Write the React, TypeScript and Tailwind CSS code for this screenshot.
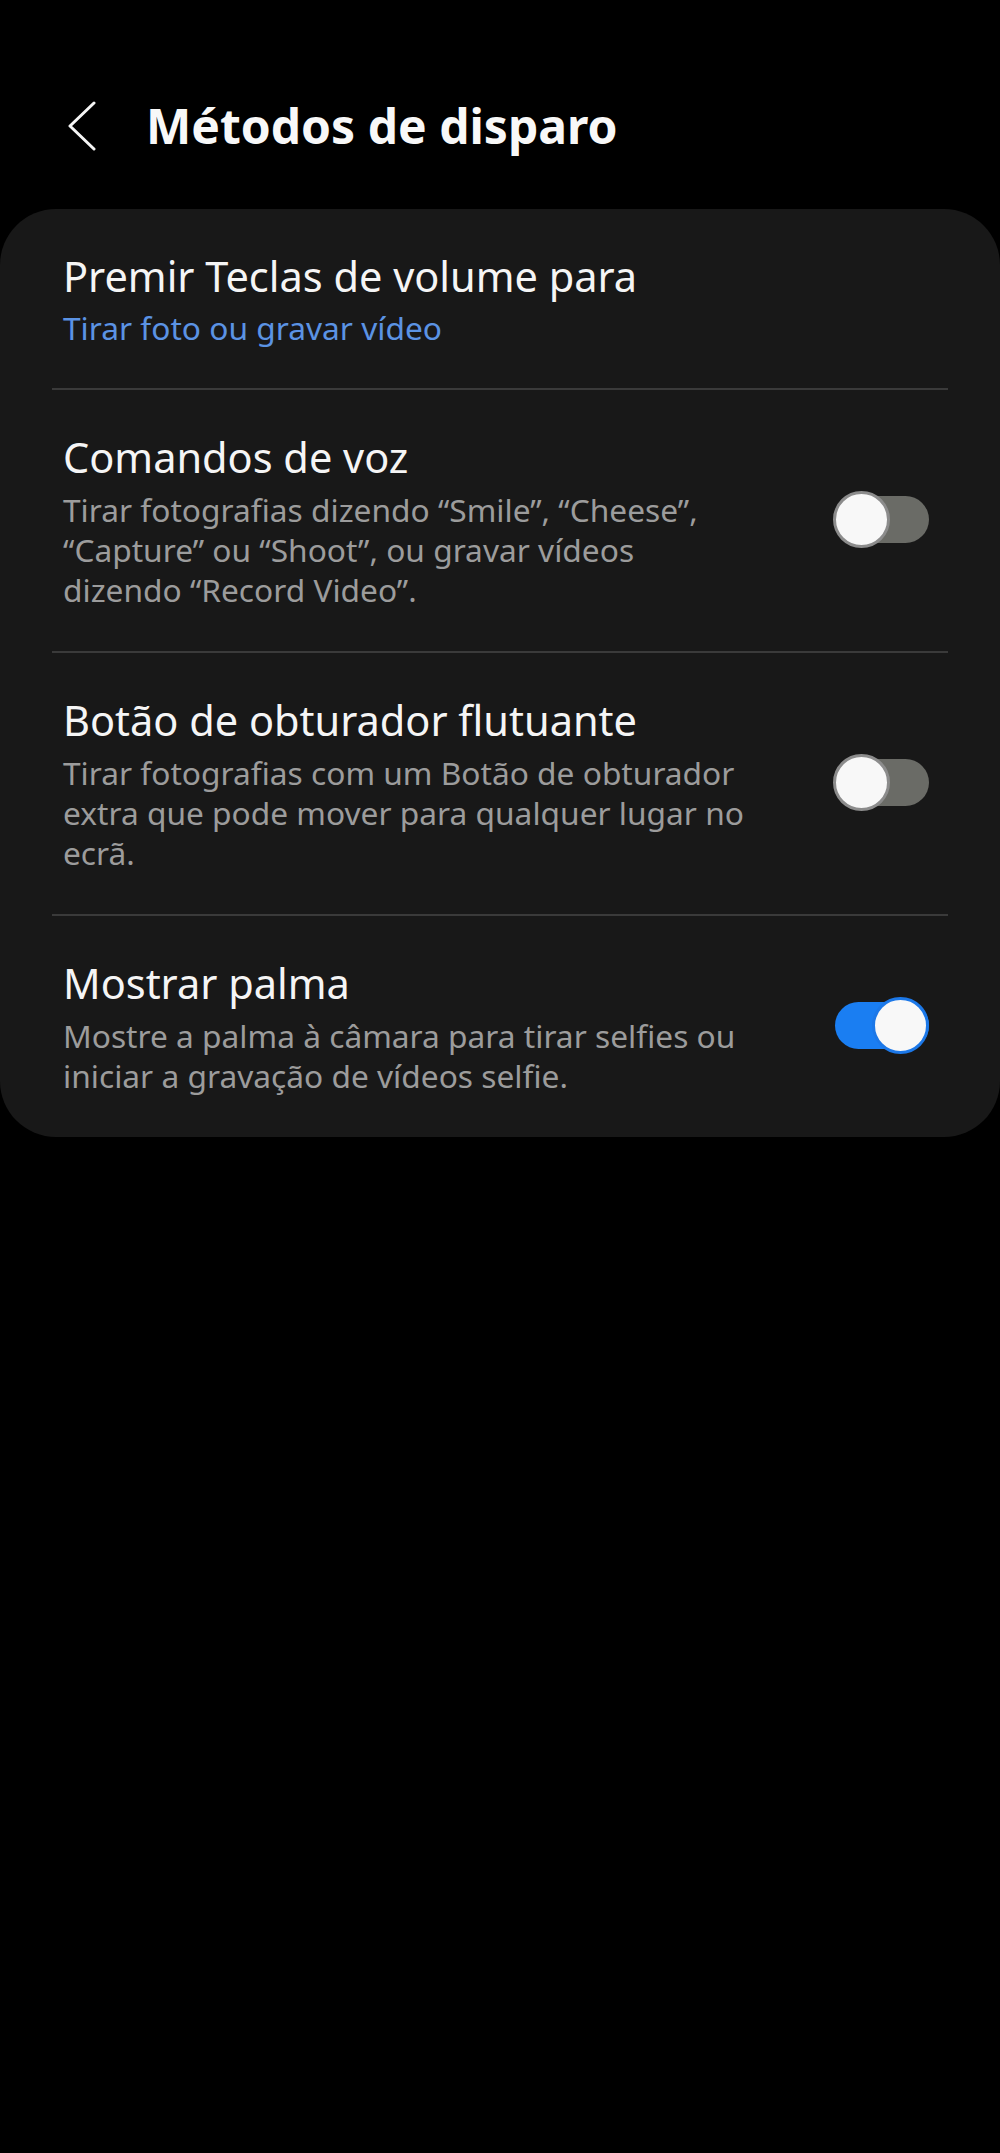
const font = { fontFamily: '"Noto Sans", "Open Sans", sans-serif' }

const Toggle = ({ on }: { on: boolean }) => {
  return (
    <div className="relative w-[96px] h-[57px] shrink-0 mb-[5px]">
      <div
        className={
          on
            ? "absolute left-[2px] right-0 top-[5px] h-[47px] rounded-full bg-[#1a7ef2]"
            : "absolute left-[2px] right-0 top-[5px] h-[47px] rounded-full bg-[#6a6b66]"
        }
      />
      <div
        className={
          on
            ? "absolute right-0 top-0 w-[57px] h-[57px] rounded-full bg-[#f8f8f8] border-[3px] border-[#1c78e8]"
            : "absolute left-0 top-0 w-[57px] h-[57px] rounded-full bg-[#f8f8f8] border-[3px] border-[#8c8c8c]"
        }
      />
    </div>
  )
}

const Divider = () => <div className="mx-[52px] h-[2px] bg-[#3a3a3a]" />

const Row = ({ title, lines, toggle }: { title: string; lines: string[]; toggle: boolean }) => {
  return (
    <div className="flex items-center pl-[63px] pr-[71px] pt-[43px] pb-[41px]">
      <div className="flex-1 flex flex-col gap-[9px]">
        <div className="text-[41.5px] leading-[48px] text-[#f5f5f5]">{title}</div>
        <div className="text-[31.7px] leading-[40px] text-[#9c9c9c]">
          {lines.map((l, i) => (
            <div key={i}>{l}</div>
          ))}
        </div>
      </div>
      <Toggle on={toggle} />
    </div>
  )
}

export default function App() {
  return (
    <div className="w-[1000px] h-[2153px] bg-black" style={font}>
      {/* header */}
      <div className="h-[209px] pt-[96px]">
        <div className="flex items-center h-[60px]">
          <div className="pl-[67px] w-[146px]">
            <svg width="30" height="50" viewBox="0 0 30 50" fill="none">
              <path d="M27 2 L3 25 L27 48" stroke="#f5f5f5" strokeWidth="3" strokeLinecap="round" strokeLinejoin="round" />
            </svg>
          </div>
          <h1 className="text-[48px] leading-[60px] font-bold text-[#f8f8f8]">Métodos de disparo</h1>
        </div>
      </div>

      {/* card */}
      <div className="bg-[#181818] rounded-[56px]">
        <div className="pl-[63px] pr-[71px] pt-[43px] pb-[40px] flex flex-col gap-[8px]">
          <div className="text-[41.5px] leading-[48px] text-[#f5f5f5]">Premir Teclas de volume para</div>
          <div className="text-[31.7px] leading-[40px] text-[#5b93e4]">Tirar foto ou gravar vídeo</div>
        </div>
        <Divider />
        <Row
          title="Comandos de voz"
          lines={[
            "Tirar fotografias dizendo “Smile”, “Cheese”,",
            "“Capture” ou “Shoot”, ou gravar vídeos",
            "dizendo “Record Video”.",
          ]}
          toggle={false}
        />
        <Divider />
        <Row
          title="Botão de obturador flutuante"
          lines={[
            "Tirar fotografias com um Botão de obturador",
            "extra que pode mover para qualquer lugar no",
            "ecrã.",
          ]}
          toggle={false}
        />
        <Divider />
        <Row
          title="Mostrar palma"
          lines={[
            "Mostre a palma à câmara para tirar selfies ou",
            "iniciar a gravação de vídeos selfie.",
          ]}
          toggle={true}
        />
      </div>
    </div>
  )
}
